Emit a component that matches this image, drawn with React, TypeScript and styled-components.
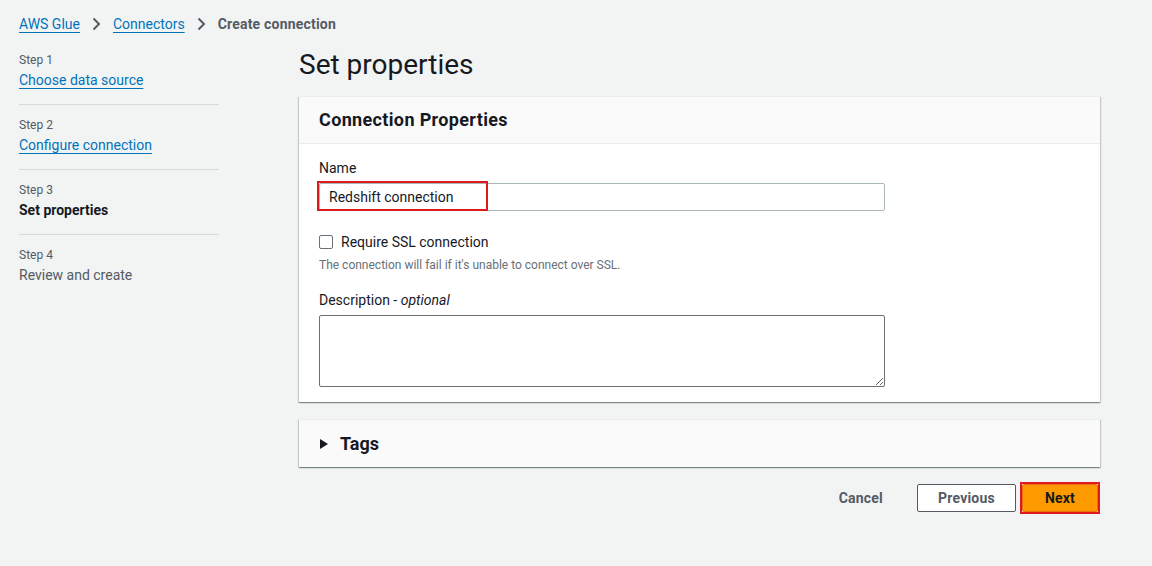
import React from "react";
import styled, { createGlobalStyle } from "styled-components";

const Global = createGlobalStyle`
  html, body { margin: 0; padding: 0; background: #f2f3f3; }
  body { font-family: Roboto, "Open Sans", Arial, sans-serif; color: #16191f; font-size: 14px; }
  * { box-sizing: border-box; }
`;

const Page = styled.div`
  width: 1152px;
  height: 566px;
  padding: 13px 52px 0 19px;
`;

const Crumbs = styled.nav`
  display: flex;
  align-items: center;
  height: 22px;
  font-size: 14px;
`;

const CrumbLink = styled.a`
  color: #0073bb;
  text-decoration: underline;
  text-underline-offset: 3px;
`;

const CrumbSep = styled.span`
  display: inline-flex;
  margin: 0 12px;
  color: #545b64;
`;

const CrumbCurrent = styled.span`
  color: #545b64;
  font-weight: 700;
  letter-spacing: 0.2px;
`;

const Layout = styled.div`
  display: grid;
  grid-template-columns: 200px 1fr;
  column-gap: 80px;
  margin-top: 12px;
`;

const Steps = styled.ol`
  list-style: none;
  margin: 0;
  padding: 0;
  padding-top: 5px;
`;

const StepItem = styled.li<{ $last?: boolean }>`
  padding: 0 0 14px;
  margin-bottom: 12px;
  border-bottom: ${(p) => (p.$last ? "none" : "1px solid #d5dbdb")};
`;

const StepNum = styled.div`
  font-size: 12px;
  color: #545b64;
  line-height: 16px;
`;

const StepLabel = styled.div<{ $kind: "link" | "current" | "future" }>`
  margin-top: 2px;
  line-height: 20px;
  font-size: 14px;
  color: ${(p) => (p.$kind === "link" ? "#0073bb" : p.$kind === "current" ? "#16191f" : "#545b64")};
  font-weight: ${(p) => (p.$kind === "current" ? 700 : 400)};
  text-decoration: ${(p) => (p.$kind === "link" ? "underline" : "none")};
  text-underline-offset: 3px;
`;

const Main = styled.main`
  display: flex;
  flex-direction: column;
`;

const Title = styled.h1`
  margin: 0;
  font-size: 28px;
  font-weight: 400;
  line-height: 36px;
  color: #16191f;
  height: 49px;
`;

const Card = styled.section`
  background: #fff;
  border-top: 1px solid #eaeded;
  box-shadow: 0 1px 1px 0 rgba(0, 28, 36, 0.3), 1px 1px 1px 0 rgba(0, 28, 36, 0.15),
    -1px 1px 1px 0 rgba(0, 28, 36, 0.15);
`;

const CardHeader = styled.header`
  background: #fafafa;
  border-bottom: 1px solid #eaeded;
  height: 47px;
  padding: 0 20px 1px;
  display: flex;
  align-items: center;
  font-size: 18px;
  font-weight: 700;
  letter-spacing: 0.35px;
`;

const CardBody = styled.div`
  padding: 14px 20px 15px;
  display: flex;
  flex-direction: column;
`;

const Label = styled.label`
  font-size: 14px;
  line-height: 20px;
  display: block;
  margin-bottom: 5px;
  em { font-style: italic; }
`;

const FieldWrap = styled.div`
  position: relative;
  width: 566px;
`;

const TextInput = styled.input`
  width: 566px;
  height: 28px;
  border: 1px solid #aab7b8;
  border-radius: 2px;
  padding: 0 9px;
  font: inherit;
  font-size: 14px;
  color: #16191f;
  outline: none;
`;

const Highlight = styled.div`
  position: absolute;
  left: -2px;
  top: -2px;
  width: 171px;
  height: 30px;
  border: 2px solid #e0191f;
  pointer-events: none;
`;

const CheckRow = styled.label`
  display: flex;
  align-items: center;
  gap: 8px;
  margin-top: 21px;
  font-size: 14px;
  line-height: 20px;
`;

const CheckBox = styled.span`
  width: 14px;
  height: 14px;
  border: 1px solid #687078;
  border-radius: 2px;
  background: #fff;
`;

const Hint = styled.div`
  margin-top: 5px;
  font-size: 12px;
  line-height: 16px;
  color: #687078;
`;

const DescGroup = styled.div`
  margin-top: 17px;
`;

const TextArea = styled.textarea`
  width: 566px;
  height: 72px;
  border: 1px solid #687078;
  border-radius: 2px;
  display: block;
  font: inherit;
  outline: none;
`;

const TagsCard = styled(Card)`
  background: #fafafa;
  margin-top: 17px;
  height: 48px;
  display: flex;
  align-items: center;
  padding: 0 20px 0 21px;
  gap: 12px;
  font-size: 18px;
  font-weight: 700;
`;

const Actions = styled.div`
  display: flex;
  justify-content: flex-end;
  align-items: center;
  margin-top: 15px;
  gap: 4px;
`;

const TextButton = styled.button`
  background: none;
  border: none;
  font: inherit;
  font-weight: 700;
  color: #545b64;
  padding: 0 20px;
  height: 28px;
  margin-right: 10px;
  letter-spacing: 0.2px;
`;

const Button = styled.button<{ $primary?: boolean }>`
  font: inherit;
  font-weight: 700;
  font-size: 14px;
  height: 28px;
  padding: 0 20px;
  border-radius: 2px;
  border: 1px solid ${(p) => (p.$primary ? "#ec7211" : "#545b64")};
  background: ${(p) => (p.$primary ? "#ff9900" : "#fff")};
  color: ${(p) => (p.$primary ? "#16191f" : "#545b64")};
  min-width: ${(p) => (p.$primary ? "76px" : "99px")};
  letter-spacing: 0.2px;
`;

const RedFrame = styled.span`
  display: inline-flex;
  border: 2px solid #e0191f;
`;

const Chevron = () => (
  <svg width="9" height="14" viewBox="0 0 9 14">
    <path d="M1.5 1.5 L7 7 L1.5 12.5" fill="none" stroke="#545b64" strokeWidth="2" />
  </svg>
);

const Caret = () => (
  <svg width="8" height="10" viewBox="0 0 8 10">
    <path d="M0 0 L8 5 L0 10 Z" fill="#16191f" />
  </svg>
);

const steps = [
  { n: 1, label: "Choose data source", kind: "link" as const },
  { n: 2, label: "Configure connection", kind: "link" as const },
  { n: 3, label: "Set properties", kind: "current" as const },
  { n: 4, label: "Review and create", kind: "future" as const },
];

export default function App() {
  return (
    <>
      <Global />
      <Page>
        <Crumbs>
          <CrumbLink>AWS Glue</CrumbLink>
          <CrumbSep><Chevron /></CrumbSep>
          <CrumbLink>Connectors</CrumbLink>
          <CrumbSep><Chevron /></CrumbSep>
          <CrumbCurrent>Create connection</CrumbCurrent>
        </Crumbs>
        <Layout>
          <Steps>
            {steps.map((s, i) => (
              <StepItem key={s.n} $last={i === steps.length - 1}>
                <StepNum>Step {s.n}</StepNum>
                <StepLabel $kind={s.kind}>{s.label}</StepLabel>
              </StepItem>
            ))}
          </Steps>
          <Main>
            <Title>Set properties</Title>
            <Card>
              <CardHeader>Connection Properties</CardHeader>
              <CardBody>
                <Label>Name</Label>
                <FieldWrap>
                  <TextInput defaultValue="Redshift connection" />
                  <Highlight />
                </FieldWrap>
                <CheckRow>
                  <CheckBox />
                  Require SSL connection
                </CheckRow>
                <Hint>The connection will fail if it's unable to connect over SSL.</Hint>
                <DescGroup>
                  <Label>
                    Description - <em>optional</em>
                  </Label>
                  <TextArea />
                </DescGroup>
              </CardBody>
            </Card>
            <TagsCard>
              <Caret />
              Tags
            </TagsCard>
            <Actions>
              <TextButton>Cancel</TextButton>
              <Button>Previous</Button>
              <RedFrame>
                <Button $primary>Next</Button>
              </RedFrame>
            </Actions>
          </Main>
        </Layout>
      </Page>
    </>
  );
}
